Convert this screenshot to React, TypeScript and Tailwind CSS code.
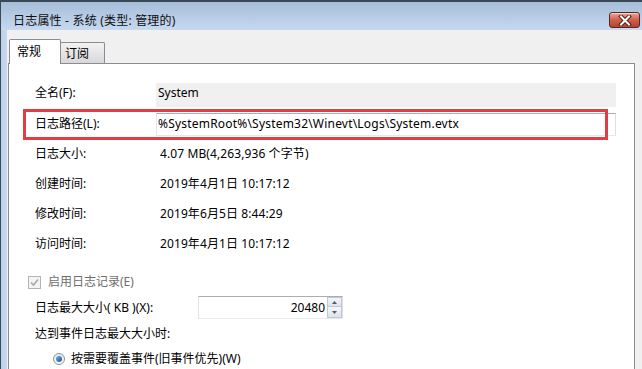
import React from 'react'

function CloseButton() {
  return (
    <div className="mt-[10px] ml-auto mr-[2px] w-[31px] h-[16px] rounded-[3px] border border-[#5b2620] bg-gradient-to-b from-[#e8a594] via-[#cf5f4c] to-[#b8402e] flex items-center justify-center shadow-[inset_0_1px_0_rgba(255,255,255,0.5)]">
      <svg width="14" height="11" viewBox="0 0 14 11">
        <path d="M3 1.5 L11 9.5 M11 1.5 L3 9.5" stroke="#5a1d14" strokeWidth="4" strokeLinecap="square" />
        <path d="M3 1.5 L11 9.5 M11 1.5 L3 9.5" stroke="#ffffff" strokeWidth="2" strokeLinecap="square" />
      </svg>
    </div>
  )
}

function Row({ label, value }: { label: string; value: string }) {
  return (
    <div className="h-[30px] flex items-center">
      <div className="w-[122px] shrink-0">{label}</div>
      <div className="pl-[3px] tracking-[0.1px]">{value}</div>
    </div>
  )
}

export default function App() {
  return (
    <div className="relative w-[642px] h-[369px] overflow-hidden flex flex-col text-[12px] leading-[16px] text-black font-[family-name:'Noto_Sans','Noto_Sans_CJK_SC',sans-serif]">
      {/* Title bar */}
      <div className="h-[30px] shrink-0 flex border-t-2 border-l border-[#3a4757] bg-gradient-to-b from-[#a6bdd8] via-[#b6cbe4] to-[#c6d9ef]">
        <div className="pl-[12px] pt-[11px] text-[#101010] tracking-[0.2px]">日志属性 - 系统 (类型: 管理的)</div>
        <CloseButton />
      </div>

      <div className="flex flex-1 min-h-0">
        {/* window frame */}
        <div className="w-[7px] shrink-0 border-l border-[#3a4757] bg-gradient-to-r from-[#bcd0e7] to-[#c9daec]" />

        <div className="flex-1 flex flex-col bg-[#f0f0f0] pl-[1px] pt-[9px] pr-[7px]">
          {/* Tabs */}
          <div className="h-[24px] flex items-end pl-[1px] shrink-0">
            <div className="relative z-10 w-[52px] h-[25px] -mb-[1px] bg-white border border-b-0 border-[#898c95] rounded-t-[2px] pl-[7px] pt-[4px]">常规</div>
            <div className="w-[45px] h-[21px] -ml-[1px] border border-b-0 border-[#898c95] rounded-t-[2px] bg-gradient-to-b from-[#f2f2f2] to-[#d8d8d8] pl-[4px] pt-[3px]">订阅</div>
          </div>

          {/* Panel */}
          <div className="flex-1 bg-white border border-[#898c95] pt-[19px] pl-[26px]">
            <div className="flex items-start">
              <div className="w-[121px] shrink-0 pt-[2px]">全名(F):</div>
              <div className="w-[460px] h-[24px] bg-[#f0f0f0] pl-[2px] pt-[2px]">System</div>
            </div>
            <div className="flex items-start mt-[6px]">
              <div className="w-[121px] shrink-0 pt-[3px]">日志路径(L):</div>
              <div className="w-[460px] h-[23px] bg-white border border-[#abadb3] border-l-[#e2e3ea] border-r-[#dbdfe6] border-b-[#e3e9ef] pl-[1px] pt-[2px] tracking-[0.2px]">
                %SystemRoot%\System32\Winevt\Logs\System.evtx
              </div>
            </div>
            <div className="mt-[3px]">
              <Row label="日志大小:" value="4.07 MB(4,263,936 个字节)" />
              <Row label="创建时间:" value="2019年4月1日 10:17:12" />
              <Row label="修改时间:" value="2019年6月5日 8:44:29" />
              <Row label="访问时间:" value="2019年4月1日 10:17:12" />
            </div>

            <div className="h-[20px] mt-[13px] -ml-[7px] flex items-center gap-[7px] text-[#6d6d6d]">
              <div className="w-[13px] h-[13px] border border-[#b4b4b4] bg-[#f4f4f4] flex items-center justify-center">
                <svg width="9" height="9" viewBox="0 0 9 9">
                  <path d="M1 4.5 L3.5 7 L8 1.5" stroke="#a8a8a8" strokeWidth="1.6" fill="none" />
                </svg>
              </div>
              <span>启用日志记录(E)</span>
            </div>

            <div className="h-[23px] mt-[4px] flex items-center">
              <div className="w-[163px] shrink-0">日志最大大小( KB )(X):</div>
              <div className="w-[145px] h-[23px] flex items-center border border-[#abadb3] border-l-[#e2e3ea] border-r-[#dbdfe6] border-b-[#e3e9ef]">
                <div className="flex-1 text-right pr-[2px]">20480</div>
                <div className="w-[15px] h-[21px] flex flex-col">
                  <div className="h-[10px] border border-[#c2c6d0] bg-gradient-to-b from-[#f6f7f9] to-[#dfe3ea] flex items-center justify-center">
                    <svg width="5" height="3" viewBox="0 0 5 3"><path d="M0 3 L2.5 0 L5 3 Z" fill="#4b5b78" /></svg>
                  </div>
                  <div className="h-[11px] border border-t-0 border-[#c2c6d0] bg-gradient-to-b from-[#f6f7f9] to-[#dfe3ea] flex items-center justify-center">
                    <svg width="5" height="3" viewBox="0 0 5 3"><path d="M0 0 L2.5 3 L5 0 Z" fill="#4b5b78" /></svg>
                  </div>
                </div>
              </div>
            </div>

            <div className="h-[20px] mt-[5px] flex items-center">达到事件日志最大大小时:</div>

            <div className="h-[20px] mt-[5px] ml-[18px] flex items-center gap-[6px]">
              <div className="w-[12px] h-[12px] rounded-full border border-[#8e9195] bg-gradient-to-b from-[#e8e8e8] to-[#fafafa] flex items-center justify-center">
                <div className="w-[6px] h-[6px] rounded-full bg-gradient-to-br from-[#6fb3ec] to-[#1b4f9a]" />
              </div>
              <span>按需要覆盖事件(旧事件优先)(W)</span>
            </div>
          </div>
        </div>
      </div>

      {/* annotation box */}
      <div className="absolute left-[23px] top-[109px] w-[585px] h-[31px] border-[3px] border-[#e23c44] pointer-events-none" />
    </div>
  )
}
